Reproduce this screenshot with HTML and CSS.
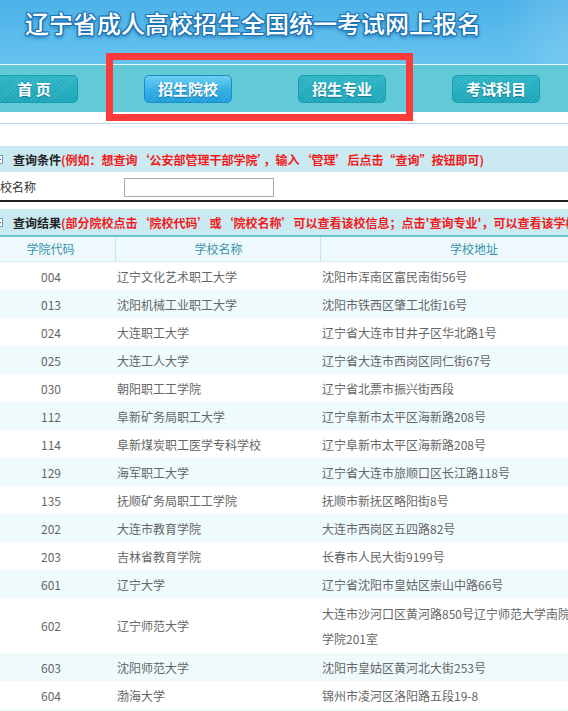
FILE: index.html
```html
<!DOCTYPE html>
<html lang="zh-CN">
<head>
<meta charset="utf-8">
<title>辽宁省成人高校招生全国统一考试网上报名</title>
<link rel="stylesheet" href="styles.css">
</head>
<body>
<div class="page">
  <header class="banner">
    <h1 class="title">辽宁省成人高校招生全国统一考试网上报名</h1>
  </header>
  <nav class="nav">
    <a class="btn">首 页</a>
    <a class="btn btn-active">招生院校</a>
    <a class="btn">招生专业</a>
    <a class="btn">考试科目</a>
  </nav>
  <div class="highlight"></div>
  <div class="rule"></div>

  <div class="bar bar-query">
    <svg class="plus" width="9" height="9" viewBox="0 0 9 9"><rect x="0.5" y="0.5" width="8" height="8" fill="#fff" stroke="#6a9fb5"/><path d="M2 4.5h5M4.5 2v5" stroke="#2d6f8a"/></svg>
    <span class="bar-title">查询条件</span><span class="bar-note">(例如：想查询‘公安部管理干部学院’，输入‘管理’后点击“查询”按钮即可)</span>
  </div>
  <div class="form-row">
    <span class="label">学校名称</span>
    <input class="input" type="text">
  </div>

  <div class="bar bar-result">
    <svg class="plus" width="9" height="9" viewBox="0 0 9 9"><rect x="0.5" y="0.5" width="8" height="8" fill="#fff" stroke="#6a9fb5"/><path d="M2 4.5h5M4.5 2v5" stroke="#2d6f8a"/></svg>
    <span class="bar-title">查询结果</span><span class="bar-note">(部分院校点击‘院校代码’或‘院校名称’可以查看该校信息；点击'查询专业'，可以查看该学校的招生专业)</span>
  </div>

  <div class="table">
    <div class="row head"><div class="c1">学院代码</div><div class="c2">学校名称</div><div class="c3">学校地址</div></div>
    <div class="row"><div class="c1">004</div><div class="c2">辽宁文化艺术职工大学</div><div class="c3">沈阳市浑南区富民南街56号</div></div>
    <div class="row alt"><div class="c1">013</div><div class="c2">沈阳机械工业职工大学</div><div class="c3">沈阳市铁西区肇工北街16号</div></div>
    <div class="row"><div class="c1">024</div><div class="c2">大连职工大学</div><div class="c3">辽宁省大连市甘井子区华北路1号</div></div>
    <div class="row alt"><div class="c1">025</div><div class="c2">大连工人大学</div><div class="c3">辽宁省大连市西岗区同仁街67号</div></div>
    <div class="row"><div class="c1">030</div><div class="c2">朝阳职工工学院</div><div class="c3">辽宁省北票市振兴街西段</div></div>
    <div class="row alt"><div class="c1">112</div><div class="c2">阜新矿务局职工大学</div><div class="c3">辽宁阜新市太平区海新路208号</div></div>
    <div class="row"><div class="c1">114</div><div class="c2">阜新煤炭职工医学专科学校</div><div class="c3">辽宁阜新市太平区海新路208号</div></div>
    <div class="row alt"><div class="c1">129</div><div class="c2">海军职工大学</div><div class="c3">辽宁省大连市旅顺口区长江路118号</div></div>
    <div class="row"><div class="c1">135</div><div class="c2">抚顺矿务局职工工学院</div><div class="c3">抚顺市新抚区略阳街8号</div></div>
    <div class="row alt"><div class="c1">202</div><div class="c2">大连市教育学院</div><div class="c3">大连市西岗区五四路82号</div></div>
    <div class="row"><div class="c1">203</div><div class="c2">吉林省教育学院</div><div class="c3">长春市人民大街9199号</div></div>
    <div class="row alt"><div class="c1">601</div><div class="c2">辽宁大学</div><div class="c3">辽宁省沈阳市皇姑区崇山中路66号</div></div>
    <div class="row"><div class="c1">602</div><div class="c2">辽宁师范大学</div><div class="c3 multi">大连市沙河口区黄河路850号辽宁师范大学南院继续教育<br>学院201室</div></div>
    <div class="row alt"><div class="c1">603</div><div class="c2">沈阳师范大学</div><div class="c3">沈阳市皇姑区黄河北大街253号</div></div>
    <div class="row"><div class="c1">604</div><div class="c2">渤海大学</div><div class="c3">锦州市凌河区洛阳路五段19-8</div></div>
    <div class="row alt"><div class="c1">605</div><div class="c2">鞍山师范学院</div><div class="c3">鞍山市铁东区平安街43号</div></div>
  </div>
</div>
</body>
</html>
```

FILE: styles.css
```css
html, body {
  margin: 0;
  padding: 0;
  background: #fff;
}
body {
  width: 568px;
  height: 711px;
  overflow: hidden;
  font-family: "Noto Sans CJK SC", "Noto Sans", sans-serif;
  font-size: 12px;
  color: #333;
}
.page {
  position: relative;
  width: 640px;
  margin-left: -14px;
}

/* banner */
.banner {
  height: 64px;
  background:
    radial-gradient(circle at 610px 20px, rgba(255,255,255,0.18) 0, rgba(255,255,255,0.08) 60px, rgba(255,255,255,0) 90px),
    linear-gradient(180deg, #4cb2e8 0%, #5bbcec 55%, #66c3ef 100%);
  border-bottom: 1px solid #eaf7fd;
}
.title {
  margin: 0;
  padding-left: 39px;
  font-size: 24px;
  line-height: 46px;
  font-weight: 500;
  color: #fff;
  letter-spacing: 0;
  text-shadow:
    1px 0 0 #1b74b6, -1px 0 0 #1b74b6, 0 1px 0 #1b74b6, 0 -1px 0 #1b74b6,
    1px 1px 0 #1b74b6, -1px -1px 0 #1b74b6, 1px -1px 0 #1b74b6, -1px 1px 0 #1b74b6,
    0 2px 4px #0d5d9c;
}

/* nav */
.nav {
  height: 48px;
  background: #62c9d7;
  display: flex;
  align-items: flex-start;
  gap: 66px;
  padding: 10px 0 0 4px;
  box-sizing: border-box;
  border-bottom: 1px solid #ffffff;
}
.btn {
  width: 88px;
  height: 28px;
  box-sizing: border-box;
  border-radius: 5px;
  border: 1px solid #1a9db0;
  background:
    repeating-linear-gradient(135deg, rgba(255,255,255,0.09) 0 1px, rgba(255,255,255,0) 1px 3px),
    linear-gradient(180deg, #2cb4c6 0%, #1ca6b9 100%);
  color: #fff;
  font-size: 15px;
  font-weight: 700;
  line-height: 26px;
  text-align: center;
  text-shadow: 0 1px 1px rgba(0,60,90,0.45);
}
.btn-active {
  border-color: #1b8cc6;
  background:
    repeating-linear-gradient(135deg, rgba(255,255,255,0.1) 0 1px, rgba(255,255,255,0) 1px 3px),
    linear-gradient(180deg, #68cdf3 0%, #33b0e6 50%, #1c9ddb 100%);
}

.highlight {
  position: absolute;
  left: 120px;
  top: 53px;
  width: 307px;
  height: 68px;
  box-sizing: border-box;
  border: 7px solid #fd3a3a;
}

.rule {
  height: 10px;
  border-bottom: 1px solid #b6d2ea;
  margin-bottom: 22px;
}

/* bars */
.bar {
  height: 26px;
  background: #cbe9f1;
  display: flex;
  align-items: center;
  white-space: nowrap;
  font-weight: 700;
  padding-left: 9px;
}
.plus {
  flex: none;
  margin-left: -1px;
  margin-right: 10px;
}
.bar-title {
  color: #222;
}
.bar-note {
  color: #f21a1a;
}
.bar-result {
  border-bottom: 2px solid #6fc3d3;
}

.form-row {
  height: 28px;
  display: flex;
  align-items: center;
  border-bottom: 2px solid #222;
  margin-bottom: 7px;
  padding-left: 2px;
}
.label {
  width: 136px;
  font-size: 12px;
  color: #333;
}
.input {
  width: 150px;
  height: 19px;
  box-sizing: border-box;
  border: 1px solid #aaa;
  margin: 3px 0 0 0;
  padding: 0;
}

/* table */
.table {
  width: 640px;
}
.row {
  display: grid;
  grid-template-columns: 130px 205px 305px;
  min-height: 28px;
  align-items: center;
  color: #666;
  line-height: 25px;
  background: #fff;
}
.row.alt {
  background: #effafd;
}
.row.head {
  min-height: 25px;
  height: 25px;
  background: #edf9fc;
  color: #3a92ab;
  border-bottom: 1px solid #d4eef4;
  box-sizing: border-box;
  align-items: stretch;
}
.row.head > div {
  text-align: center;
  line-height: 24px;
  border-right: 1px solid #c4e7f0;
}
.row.head > .c3 {
  border-right: none;
}
.c1 {
  text-align: center;
}
.c2, .c3 {
  padding-left: 1px;
}
.c3.multi {
  padding: 2.5px 0 2.5px 1px;
}
```
